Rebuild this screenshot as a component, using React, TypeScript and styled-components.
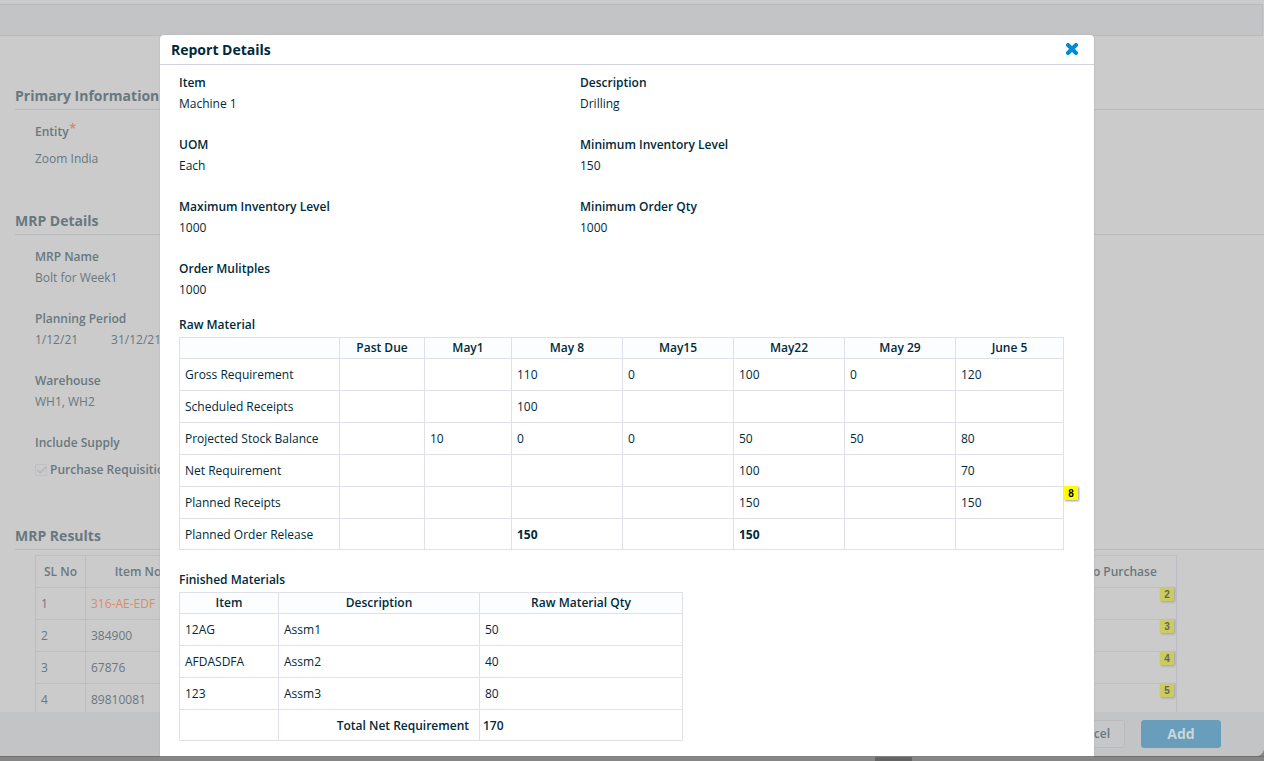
import React from "react";
import styled, { createGlobalStyle } from "styled-components";
import { Check } from "lucide-react";

const GlobalStyle = createGlobalStyle`
  *, *::before, *::after { box-sizing: border-box; }
  body {
    margin: 0;
    background: #868686;
    color: #002a3a;
    font-family: "Open Sans", "Liberation Sans", sans-serif;
    font-size: 12px;
    line-height: 20px;
  }
  h1, h2, h3, p, dl, dt, dd { margin: 0; }
  button, input { font: inherit; }
`;

const Shell = styled.div`
  position: relative;
  display: flex;
  flex-direction: column;
  height: 100vh;
  overflow: hidden;
`;

const Page = styled.main`
  flex: 1;
  min-height: 0;
  display: flex;
  flex-direction: column;
  padding-top: 4px;
  background: #cbcbcb;
  border-radius: 0 0 8px 0;
  overflow: hidden;
  color: #68787f;
`;

const Toolbar = styled.div`
  flex: none;
  height: 32px;
  margin-right: 1px;
  background: #c3c4c6;
  border: 1px solid #b9babd;
  border-left: 0;
`;

const PageBody = styled.div`
  flex: 1;
  min-height: 0;
  overflow: hidden;
  padding: 50px 0 0 15px;
  display: flex;
  flex-direction: column;
  gap: 42px;
`;

const Section = styled.section<{ $space?: number }>`
  padding-top: ${(p) => p.$space ?? 0}px;
`;

const SectionTitle = styled.h2`
  font-size: 14px;
  font-weight: 700;
  padding-bottom: 3px;
  border-bottom: 1px solid #b9babc;
`;

const SectionFields = styled.dl`
  display: flex;
  flex-direction: column;
  gap: 21px;
  padding: 12px 0 0 20px;
`;

const FieldBox = styled.div<{ $gap?: number }>`
  display: flex;
  flex-direction: column;
  gap: ${(p) => p.$gap ?? 1}px;
`;

const Term = styled.dt`
  font-weight: 600;
`;

const Value = styled.dd`
  display: flex;
  gap: 33px;
`;

const Required = styled.sup`
  color: #d98d63;
  font-size: 12px;
  font-weight: 700;
  line-height: 0;
  vertical-align: 3px;
  margin-left: 1px;
`;

const CheckLabel = styled.label`
  display: flex;
  align-items: center;
  gap: 3px;
  font-weight: 600;
`;

const CheckBox = styled.span`
  display: grid;
  width: 12px;
  height: 12px;
  > * { grid-area: 1 / 1; }
  svg { width: 11px; height: 11px; place-self: center; color: #b9babd; stroke-width: 5; }
`;

const CheckInput = styled.input`
  appearance: none;
  width: 12px;
  height: 12px;
  margin: 0;
  border: 1px solid #bfc0c3;
  border-radius: 2px;
`;

const ResultsTable = styled.table`
  width: calc(100% - 107px);
  margin: 5px 0 0 20px;
  border-collapse: collapse;
  table-layout: fixed;
  th, td { height: 32px; padding: 0 5px; border: 1px solid #bdbdc3; text-align: left; white-space: nowrap; }
  th { font-weight: 600; text-align: center; }
`;

const ItemLink = styled.a`
  color: #d98d63;
  text-decoration: none;
`;

const BadgeCell = styled.td`
  position: relative;
`;

const Badge = styled.span<{ $dim?: boolean; $right: number }>`
  position: absolute;
  top: -1px;
  right: ${(p) => p.$right}px;
  width: 14px;
  height: 14px;
  background: ${(p) => (p.$dim ? "#cbcb64" : "#ffff00")};
  color: ${(p) => (p.$dim ? "#666650" : "#000000")};
  box-shadow: 1px 1px 2px ${(p) => (p.$dim ? "#a0a0a0" : "#999999")};
  font: 700 10px/15px "Liberation Sans", sans-serif;
  text-align: center;
`;

const Footer = styled.footer`
  flex: none;
  height: 44px;
  display: flex;
  align-items: center;
  justify-content: flex-end;
  gap: 16px;
  padding-right: 43px;
  background: #c3c4c6;
`;

const FooterButton = styled.button<{ $primary?: boolean }>`
  height: 28px;
  min-width: ${(p) => (p.$primary ? 80 : 60)}px;
  padding: 0 14px;
  border-radius: 3px;
  border: 1px solid ${(p) => (p.$primary ? "#689dbc" : "#b9babd")};
  background: ${(p) => (p.$primary ? "#689dbc" : "#c6c7c9")};
  color: ${(p) => (p.$primary ? "#cbd5da" : "#68787f")};
  font-size: ${(p) => (p.$primary ? 14 : 12)}px;
  font-weight: ${(p) => (p.$primary ? 700 : 600)};
`;

const ScrollTrack = styled.div`
  flex: none;
  height: 5px;
  padding-left: 875px;
  background: #868686;
  border-top: 1px solid #707070;
`;

const ScrollThumb = styled.div`
  width: 37px;
  height: 4px;
  background: #646464;
`;

const Overlay = styled.div`
  position: absolute;
  inset: 0;
  display: flex;
  padding: 35px 170px 5px 160px;
`;

const Dialog = styled.section`
  flex: 1;
  min-width: 0;
  background: #ffffff;
  border-radius: 4px 4px 0 0;
  box-shadow: 0 0 2px #b0b0b0;
  overflow: hidden;
`;

const DialogHeader = styled.header`
  display: flex;
  align-items: center;
  justify-content: space-between;
  height: 30px;
  padding: 0 16px 0 11px;
  border-bottom: 1px solid #d0d3df;
`;

const DialogTitle = styled.h1`
  font-size: 14px;
  font-weight: 700;
`;

const CloseButton = styled.button`
  display: flex;
  padding: 0 0 2px;
  border: 0;
  background: none;
  color: #008ad4;
`;

const DialogBody = styled.div`
  padding: 8px 30px 0 19px;
`;

const DetailGrid = styled.dl`
  display: grid;
  grid-template-columns: 401px 1fr;
  row-gap: 21px;
`;

const TableTitle = styled.h3<{ $space: number }>`
  margin-top: ${(p) => p.$space}px;
  margin-bottom: 2px;
  font-size: 12px;
  font-weight: 600;
`;

const DataTable = styled.table<{ $width?: string }>`
  width: ${(p) => p.$width ?? "100%"};
  border-collapse: collapse;
  table-layout: fixed;
  th, td { border: 1px solid #dfe0e9; padding: 0 5px; text-align: left; white-space: nowrap; }
  td, tbody th { height: 32px; font-weight: 400; }
  thead th, thead td { height: 21px; background: #fcfdff; font-weight: 600; text-align: center; line-height: 18px; }
  tbody tr:last-child > * { height: 31px; padding-top: 1px; }
`;

const StrongCell = styled.td`
  && { font-weight: 700; }
`;

const TotalLabel = styled.th`
  && { font-weight: 600; text-align: right; padding-right: 10px; }
`;

const TotalValue = styled.td`
  && { font-weight: 600; padding-left: 3px; }
`;

const results = [
  ["1", "316-AE-EDF", "2"],
  ["2", "384900", "3"],
  ["3", "67876", "4"],
  ["4", "89810081", "5"],
];

const details = [
  ["Item", "Machine 1"],
  ["Description", "Drilling"],
  ["UOM", "Each"],
  ["Minimum Inventory Level", "150"],
  ["Maximum Inventory Level", "1000"],
  ["Minimum Order Qty", "1000"],
  ["Order Mulitples", "1000"],
];

const periods = ["Past Due", "May1", "May 8", "May15", "May22", "May 29", "June 5"];
const periodWidths = [160, 85, 87, 111, 111, 111, 111, 108];

const rawRows: { label: string; cells: string[]; strong?: boolean; note?: string }[] = [
  { label: "Gross Requirement", cells: ["", "", "110", "0", "100", "0", "120"] },
  { label: "Scheduled Receipts", cells: ["", "", "100", "", "", "", ""] },
  { label: "Projected Stock Balance", cells: ["", "10", "0", "0", "50", "50", "80"] },
  { label: "Net Requirement", cells: ["", "", "", "", "100", "", "70"] },
  { label: "Planned Receipts", cells: ["", "", "", "", "150", "", "150"], note: "8" },
  { label: "Planned Order Release", cells: ["", "", "150", "", "150", "", ""], strong: true },
];

const finished = [
  ["12AG", "Assm1", "50"],
  ["AFDASDFA", "Assm2", "40"],
  ["123", "Assm3", "80"],
];

function Columns({ widths }: { widths: (number | null)[] }) {
  return (
    <colgroup>
      {widths.map((w, i) => (
        <col key={i} width={w ?? undefined} />
      ))}
    </colgroup>
  );
}

function Field({ label, gap, children }: { label: React.ReactNode; gap?: number; children: React.ReactNode }) {
  return (
    <FieldBox $gap={gap}>
      <Term>{label}</Term>
      <Value>{children}</Value>
    </FieldBox>
  );
}

function ReportDialog() {
  return (
    <Overlay>
      <Dialog role="dialog" aria-labelledby="report-title">
        <DialogHeader>
          <DialogTitle id="report-title">Report Details</DialogTitle>
          <CloseButton type="button" aria-label="Close">
            <svg width="12" height="12" viewBox="0 0 12 12" stroke="currentColor" strokeWidth="4" strokeLinecap="round">
              <path d="M2 2 10 10M10 2 2 10" />
            </svg>
          </CloseButton>
        </DialogHeader>
        <DialogBody>
          <DetailGrid>
            {details.map(([label, value]) => (
              <Field key={label} label={label}>{value}</Field>
            ))}
          </DetailGrid>

          <TableTitle $space={15} id="raw-title">Raw Material</TableTitle>
          <DataTable aria-labelledby="raw-title">
            <Columns widths={periodWidths} />
            <thead>
              <tr>
                <td />
                {periods.map((p) => <th key={p} scope="col">{p}</th>)}
              </tr>
            </thead>
            <tbody>
              {rawRows.map((row) => (
                <tr key={row.label}>
                  <th scope="row">{row.label}</th>
                  {row.cells.map((cell, i) => {
                    if (row.note && i === row.cells.length - 1) {
                      return <BadgeCell key={i}>{cell}<Badge $right={-15}>{row.note}</Badge></BadgeCell>;
                    }
                    return row.strong ? <StrongCell key={i}>{cell}</StrongCell> : <td key={i}>{cell}</td>;
                  })}
                </tr>
              ))}
            </tbody>
          </DataTable>

          <TableTitle $space={20} id="finished-title">Finished Materials</TableTitle>
          <DataTable $width="504px" aria-labelledby="finished-title">
            <Columns widths={[99, 201, 203]} />
            <thead>
              <tr>
                <th scope="col">Item</th>
                <th scope="col">Description</th>
                <th scope="col">Raw Material Qty</th>
              </tr>
            </thead>
            <tbody>
              {finished.map((row) => (
                <tr key={row[0]}>
                  {row.map((cell) => <td key={cell}>{cell}</td>)}
                </tr>
              ))}
              <tr>
                <td />
                <TotalLabel scope="row">Total Net Requirement</TotalLabel>
                <TotalValue>170</TotalValue>
              </tr>
            </tbody>
          </DataTable>
        </DialogBody>
      </Dialog>
    </Overlay>
  );
}

export default function App() {
  return (
    <Shell>
      <GlobalStyle />
      <Page>
        <Toolbar />
        <PageBody>
          <Section>
            <SectionTitle>Primary Information</SectionTitle>
            <SectionFields>
              <Field gap={7} label={<>Entity<Required>*</Required></>}>Zoom India</Field>
            </SectionFields>
          </Section>
          <Section>
            <SectionTitle>MRP Details</SectionTitle>
            <SectionFields>
              <Field label="MRP Name">Bolt for Week1</Field>
              <Field label="Planning Period"><span>1/12/21</span><span>31/12/21</span></Field>
              <Field label="Warehouse">WH1, WH2</Field>
              <Field gap={7} label="Include Supply">
                <CheckLabel>
                  <CheckBox>
                    <CheckInput type="checkbox" defaultChecked disabled />
                    <Check aria-hidden />
                  </CheckBox>
                  Purchase Requisition
                </CheckLabel>
              </Field>
            </SectionFields>
          </Section>
          <Section $space={4}>
            <SectionTitle>MRP Results</SectionTitle>
            <ResultsTable>
              <Columns widths={[50, 105, null, 110]} />
              <thead>
                <tr>
                  <th scope="col">SL No</th>
                  <th scope="col">Item No</th>
                  <td />
                  <th scope="col">To Purchase</th>
                </tr>
              </thead>
              <tbody>
                {results.map(([no, item, note], i) => (
                  <tr key={no}>
                    <td>{no}</td>
                    <td>{i === 0 ? <ItemLink href="#item">{item}</ItemLink> : item}</td>
                    <td />
                    <BadgeCell><Badge $dim $right={2}>{note}</Badge></BadgeCell>
                  </tr>
                ))}
              </tbody>
            </ResultsTable>
          </Section>
        </PageBody>
        <Footer>
          <FooterButton type="button">Cancel</FooterButton>
          <FooterButton type="button" $primary>Add</FooterButton>
        </Footer>
      </Page>
      <ScrollTrack><ScrollThumb /></ScrollTrack>
      <ReportDialog />
    </Shell>
  );
}
